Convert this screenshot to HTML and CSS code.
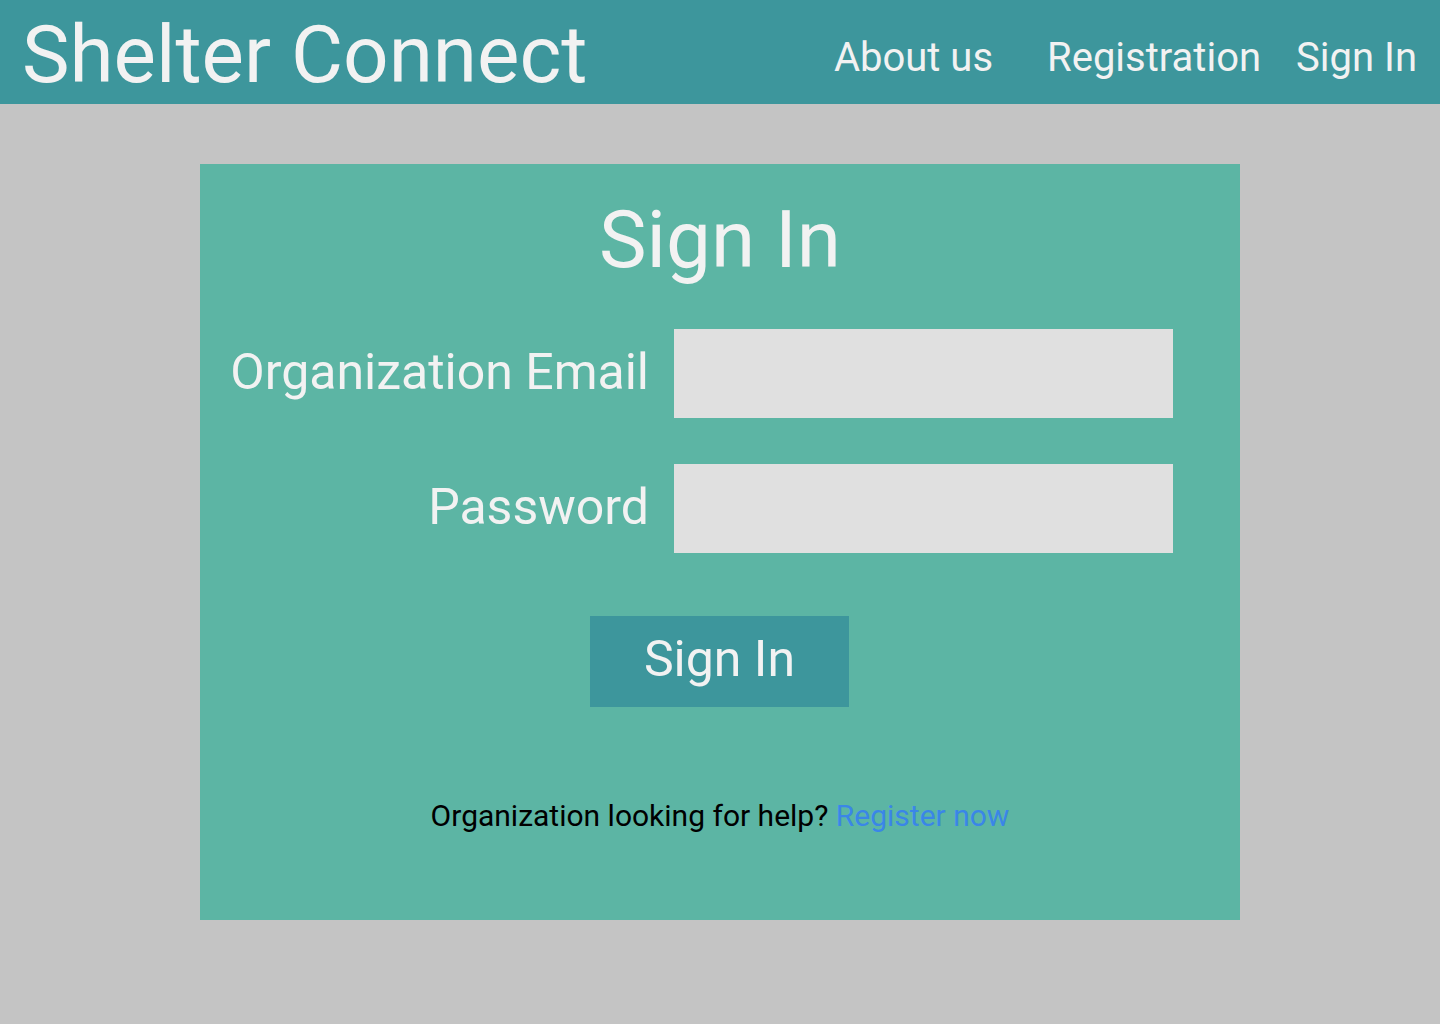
FILE: index.html
```html
<!DOCTYPE html>
<html lang="en">
<head>
<meta charset="utf-8">
<title>Shelter Connect - Sign In</title>
<link rel="stylesheet" href="styles.css">
</head>
<body>
<header class="topbar">
  <div class="brand">Shelter Connect</div>
  <nav class="nav">
    <a class="nav-link nav-about" href="#">About us</a>
    <a class="nav-link nav-reg" href="#">Registration</a>
    <a class="nav-link nav-sign" href="#">Sign In</a>
  </nav>
</header>
<main class="page">
  <section class="card">
    <h1 class="card-title">Sign In</h1>
    <form class="form">
      <label class="form-label" for="email">Organization Email</label>
      <input class="form-input" id="email" type="email">
      <label class="form-label" for="password">Password</label>
      <input class="form-input" id="password" type="password">
    </form>
    <div class="actions">
      <button class="btn" type="button">Sign In</button>
    </div>
    <p class="footer-text">Organization looking for help? <a class="footer-link" href="#">Register now</a></p>
  </section>
</main>
</body>
</html>
```
FILE: styles.css
```css
* { box-sizing: border-box; }
html, body { margin: 0; padding: 0; }
body {
  background: #c4c4c4;
  font-family: Roboto, "Liberation Sans", sans-serif;
  color: #f2f2f2;
  min-height: 1024px;
}
.topbar {
  height: 104px;
  background: #3d969c;
  display: flex;
  align-items: center;
  justify-content: space-between;
  padding: 6px 23px 0 22px;
}
.brand {
  font-size: 80px;
  line-height: 94px;
  color: #f2f2f2;
}
.nav {
  display: flex;
  align-items: center;
  padding-top: 4px;
}
.nav-link {
  font-size: 40px;
  line-height: 47px;
  color: #f2f2f2;
  text-decoration: none;
}
.nav-reg { margin-left: 54px; }
.nav-sign { margin-left: 35px; }
.page {
  padding-top: 60px;
}
.card {
  width: 1040px;
  height: 756px;
  margin: 0 auto;
  background: #5cb5a4;
  padding-top: 29px;
}
.card-title {
  margin: 0;
  text-align: center;
  font-weight: 400;
  font-size: 80px;
  line-height: 94px;
  color: #f2f2f2;
}
.form {
  margin-top: 42px;
  display: grid;
  grid-template-columns: 1fr 499px;
  column-gap: 26px;
  row-gap: 46px;
  padding-right: 67px;
  align-items: center;
}
.form-label {
  text-align: right;
  font-size: 50px;
  line-height: 59px;
  padding-bottom: 3px;
  margin-right: -1px;
  color: #f2f2f2;
}
.form-input {
  height: 89px;
  border: none;
  background: #e0e0e0;
  margin: 0;
  padding: 0 16px;
  font-size: 30px;
  font-family: inherit;
}
.actions {
  display: flex;
  justify-content: center;
  margin-top: 63px;
}
.btn {
  width: 259px;
  height: 91px;
  border: none;
  background: #3d969c;
  color: #f2f2f2;
  font-family: inherit;
  font-size: 50px;
  line-height: 59px;
  padding: 0 0 5px;
  margin-left: -1px;
}
.footer-text {
  margin: 91px 0 0;
  text-align: center;
  font-size: 30px;
  line-height: 35px;
  color: #000;
}
.footer-link {
  color: #3a86e8;
  text-decoration: none;
}
```
